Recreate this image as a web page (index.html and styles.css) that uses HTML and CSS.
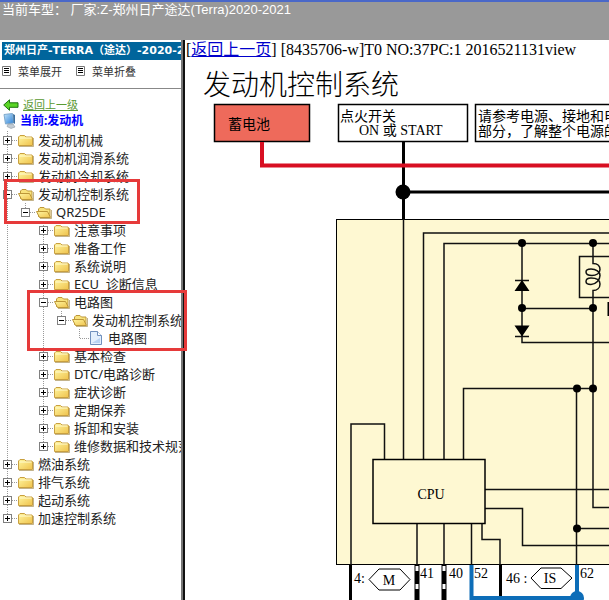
FILE: index.html
```html
<!DOCTYPE html>
<html lang="zh-CN">
<head>
    <meta charset="UTF-8">
    <meta name="viewport" content="width=device-width, initial-scale=1.0">
    <title>郑州日产途达(Terra)2020-2021</title>
    <link rel="stylesheet" href="styles.css">
</head>
<body>

    <!-- Shared icons -->
    <svg class="icon-defs" width="0" height="0" aria-hidden="true">
        <defs>
            <linearGradient id="gold" x1="0" y1="0" x2="1" y2="1">
                <stop offset="0" stop-color="#fff6a0"/>
                <stop offset="1" stop-color="#efc24c"/>
            </linearGradient>
            <linearGradient id="screen" x1="0" y1="0" x2="1" y2="1">
                <stop offset="0" stop-color="#c4e6fb"/>
                <stop offset="1" stop-color="#2b7fd6"/>
            </linearGradient>
        </defs>
        <symbol id="folder" viewBox="0 0 16 16">
            <path d="M.5 13.500V5L2 3.500h4.500l1.500 1.500h6l.5 1v7.500z" fill="url(#gold)" stroke="#c9a040"/>
            <path d="M1.500 6h12" stroke="#fffbd0"/>
            <path d="M1 14.500h14.500V6" fill="none" stroke="#9b803c" stroke-opacity=".6"/>
        </symbol>
        <symbol id="folder-open" viewBox="0 0 16 16">
            <path d="M2.500 12.500V5L4 3.500h4L9.500 5h4.500v8z" fill="#f8e27c" stroke="#bd9738"/>
            <path d="M.5 7.500h11l3 6H3.500z" fill="url(#gold)" stroke="#bd9738"/>
            <path d="M4 14.500h11.500V6" fill="none" stroke="#9b803c" stroke-opacity=".6"/>
        </symbol>
        <symbol id="page" viewBox="0 0 16 16">
            <path d="M2.500 1.500h7l4 4v9h-11z" fill="#e3effc" stroke="#7090bd"/>
            <path d="M9.500 1.500v4h4" fill="#fff" stroke="#7090bd"/>
            <path d="M4 13l8-5v5z" fill="#b9d3f3"/>
        </symbol>
        <symbol id="list" viewBox="0 0 10 10">
            <path d="M.5.5h8v9h-8z" fill="#fff" stroke="#777"/>
            <path d="M2 2.500h5M2 4.500h5M2 6.500h5" stroke="#000"/>
        </symbol>
    </svg>

    <header class="topbar">当前车型： 厂家:Z-郑州日产途达(Terra)2020-2021</header>

    <div class="frames">
        <aside class="sidebar">
            <h1 class="menu-title">郑州日产-TERRA（途达）-2020-2021</h1>
            <div class="menu-tools">
                <button type="button" id="expandAll"><svg class="list-icon"><use href="#list"/></svg>菜单展开</button>
                <button type="button" id="collapseAll"><svg class="list-icon"><use href="#list"/></svg>菜单折叠</button>
            </div>

            <div class="menu-back">
                <svg width="16" height="12" viewBox="0 0 16 12"><path d="M.7 6L6.500.8v3H15v4.500H6.500v3z" fill="#5bd526" stroke="#1d7410"/></svg>
                <a href="#">返回上一级</a>
            </div>
            <div class="menu-current">
                <svg width="13" height="16" viewBox="0 0 13 16">
                    <path d="M1 1.500L9.500.5l1 9.500-8 1z" fill="url(#screen)" stroke="#7fa9cc"/>
                    <path d="M10 1l2 1v9l-1.500-1z" fill="#3d6f9e"/>
                    <path d="M5 11h5l2 3-4 1.500-4-2z" fill="#c2cbd3" stroke="#8e9aa5" stroke-width=".6"/>
                </svg>
                <span>当前:发动机</span>
            </div>

            <ul class="tree">
                <li><div class="node"><button type="button" class="toggle" aria-label="展开"></button><svg class="icon"><use href="#folder"/></svg><span>发动机机械</span></div></li>
                <li><div class="node"><button type="button" class="toggle" aria-label="展开"></button><svg class="icon"><use href="#folder"/></svg><span>发动机润滑系统</span></div></li>
                <li><div class="node"><button type="button" class="toggle" aria-label="展开"></button><svg class="icon"><use href="#folder"/></svg><span>发动机冷却系统</span></div></li>
                <li class="open">
                    <div class="node"><button type="button" class="toggle" aria-label="折叠"></button><svg class="icon"><use href="#folder-open"/></svg><span>发动机控制系统</span></div>
                    <ul>
                        <li class="open">
                            <div class="node"><button type="button" class="toggle" aria-label="折叠"></button><svg class="icon"><use href="#folder-open"/></svg><span>QR25DE</span></div>
                            <ul>
                                <li><div class="node"><button type="button" class="toggle" aria-label="展开"></button><svg class="icon"><use href="#folder"/></svg><span>注意事项</span></div></li>
                                <li><div class="node"><button type="button" class="toggle" aria-label="展开"></button><svg class="icon"><use href="#folder"/></svg><span>准备工作</span></div></li>
                                <li><div class="node"><button type="button" class="toggle" aria-label="展开"></button><svg class="icon"><use href="#folder"/></svg><span>系统说明</span></div></li>
                                <li><div class="node"><button type="button" class="toggle" aria-label="展开"></button><svg class="icon"><use href="#folder"/></svg><span>ECU&nbsp; 诊断信息</span></div></li>
                                <li class="open">
                                    <div class="node"><button type="button" class="toggle" aria-label="折叠"></button><svg class="icon"><use href="#folder-open"/></svg><span>电路图</span></div>
                                    <ul>
                                        <li class="open">
                                            <div class="node"><button type="button" class="toggle" aria-label="折叠"></button><svg class="icon"><use href="#folder-open"/></svg><span>发动机控制系统</span></div>
                                            <ul>
                                                <li><div class="node leaf"><svg class="icon"><use href="#page"/></svg><span>电路图</span></div></li>
                                            </ul>
                                        </li>
                                    </ul>
                                </li>
                                <li><div class="node"><button type="button" class="toggle" aria-label="展开"></button><svg class="icon"><use href="#folder"/></svg><span>基本检查</span></div></li>
                                <li><div class="node"><button type="button" class="toggle" aria-label="展开"></button><svg class="icon"><use href="#folder"/></svg><span>DTC/电路诊断</span></div></li>
                                <li><div class="node"><button type="button" class="toggle" aria-label="展开"></button><svg class="icon"><use href="#folder"/></svg><span>症状诊断</span></div></li>
                                <li><div class="node"><button type="button" class="toggle" aria-label="展开"></button><svg class="icon"><use href="#folder"/></svg><span>定期保养</span></div></li>
                                <li><div class="node"><button type="button" class="toggle" aria-label="展开"></button><svg class="icon"><use href="#folder"/></svg><span>拆卸和安装</span></div></li>
                                <li><div class="node"><button type="button" class="toggle" aria-label="展开"></button><svg class="icon"><use href="#folder"/></svg><span>维修数据和技术规范</span></div></li>
                            </ul>
                        </li>
                    </ul>
                </li>
                <li><div class="node"><button type="button" class="toggle" aria-label="展开"></button><svg class="icon"><use href="#folder"/></svg><span>燃油系统</span></div></li>
                <li><div class="node"><button type="button" class="toggle" aria-label="展开"></button><svg class="icon"><use href="#folder"/></svg><span>排气系统</span></div></li>
                <li><div class="node"><button type="button" class="toggle" aria-label="展开"></button><svg class="icon"><use href="#folder"/></svg><span>起动系统</span></div></li>
                <li><div class="node"><button type="button" class="toggle" aria-label="展开"></button><svg class="icon"><use href="#folder"/></svg><span>加速控制系统</span></div></li>
            </ul>
        </aside>

        <main class="content">
            <div class="crumb">[<a href="#">返回上一页</a>] [8435706-w]T0 NO:37PC:1 2016521131view</div>

            <!-- Wiring diagram -->
            <svg class="diagram" width="600" height="560" viewBox="185 60 600 560">
                <text x="203" y="95" class="d-title">发动机控制系统</text>

                <!-- Power supply -->
                <g stroke="#000" fill="#fff" stroke-width="1.500">
                    <rect x="214.500" y="104.500" width="95" height="37" fill="#ee6a5b"/>
                    <rect x="338.500" y="104.500" width="129" height="37"/>
                    <rect x="475.500" y="104.500" width="260" height="37"/>
                </g>
                <text x="228" y="129">蓄电池</text>
                <text x="340" y="121">点火开关</text>
                <text x="359" y="135">ON 或 START</text>
                <text x="478" y="121">请参考电源、接地和电路</text>
                <text x="478" y="136">部分，了解整个电源的详</text>

                <path d="M403.500 142v77" class="cable"/>
                <path d="M403 192h400" class="cable"/>
                <path d="M262 142v23.500h540" fill="none" stroke="#d80f22" stroke-width="4"/>
                <circle cx="403" cy="192" r="7.500"/>

                <!-- ECM -->
                <rect x="336.500" y="219.500" width="460" height="345" fill="#fef8d2" stroke="#000"/>
                <g class="wire">
                    <path d="M403.500 219v241"/>
                    <path d="M423.500 460V233h380"/>
                    <path d="M444 460V243.500h360"/>
                    <path d="M463.500 460v-71.500h129.500"/>
                    <path d="M351 565V424h33.500v36"/>
                    <path d="M522 243v99.500h280"/>
                    <path d="M522 308.500h71"/>
                    <path d="M593 243v20.500c5 0 7 3 7 6c0 4-4 6-8 6c-4 0-6-1-6-3.500c0-2 2-3 5-3c5 0 9 3 9 6.500c0 4-4 9-9 9c-3 0-5-1-5-3c0-2 2-3.500 5-3.500c5 0 9 2 9 6c0 4-3 6.500-7 6.500v217h200"/>
                    <path d="M803 256.500h-223.500v41h223"/>
                    <path d="M576.500 389v176"/>
                    <path d="M485 489.500h318"/>
                    <path d="M485 508.500h37.500v37h280"/>
                    <path d="M576 528.500h230"/>
                    <path d="M417 524v41"/>
                    <path d="M444 524v41"/>
                    <path d="M471.500 524v41"/>
                    <path d="M482 524v15.500h18V565"/>
                    <path d="M515 280.500h14M515 336.500h14"/>
                </g>
                <path d="M522 280l7.500 11h-15zM522 336.500l7.500-11h-15z"/>
                <circle cx="522" cy="243" r="4"/>
                <circle cx="593" cy="243" r="4"/>
                <circle cx="522" cy="308" r="4"/>
                <circle cx="593" cy="308" r="4"/>
                <circle cx="577" cy="388.500" r="4"/>
                <circle cx="593" cy="388.500" r="4"/>
                <circle cx="577" cy="528.500" r="4"/>
                <path d="M608.500 302v14" stroke="#000" stroke-width="2"/>

                <rect x="373" y="459.500" width="112" height="64" fill="#fef8d2" stroke="#000" stroke-width="1.500"/>
                <text x="431" y="499" text-anchor="middle">CPU</text>

                <!-- Connector pins -->
                <path d="M350.500 565v60M500.500 565v32" class="cable"/>
                <path d="M417 565v60M444 565v60" stroke="#000" stroke-width="5"/>
                <path d="M417 566v60M444 566v60" stroke="#fff" stroke-width="3" stroke-dasharray="5 13"/>
                <path d="M471.500 565v33H577V565" fill="none" stroke="#0d6db8" stroke-width="4"/>
                <circle cx="577" cy="598" r="7" fill="#0d6db8"/>
                <g fill="#fff" stroke="#000">
                    <path d="M369 579.500l10-10.500h21l10 10.500-10 10.500h-21z"/>
                    <path d="M531 578l10-10h20l11 10-11 10.500h-20z"/>
                </g>
                <text x="354" y="583">4:</text>
                <text x="389" y="585" text-anchor="middle">M</text>
                <text x="420" y="578">41</text>
                <text x="449" y="578">40</text>
                <text x="474" y="578">52</text>
                <text x="506" y="583">46 :</text>
                <text x="550" y="583" text-anchor="middle">IS</text>
                <text x="580" y="578">62</text>
            </svg>
        </main>
    </div>

    <!-- Red marks over the menu -->
    <div class="mark mark-engine"></div>
    <div class="mark mark-wiring"></div>

    <script>
        // Open or close one branch of the menu
        function setOpen(item, open) {
            if (!item.querySelector("ul")) return;
            item.classList.toggle("open", open);
            item.querySelector(".icon use").setAttribute("href", open ? "#folder-open" : "#folder");
            item.querySelector(".toggle").setAttribute("aria-label", open ? "折叠" : "展开");
        }

        document.querySelectorAll(".toggle").forEach(button => {
            const item = button.closest("li");
            button.onclick = () => setOpen(item, !item.classList.contains("open"));
        });

        document.getElementById("expandAll").onclick = () =>
            document.querySelectorAll(".tree li").forEach(item => setOpen(item, true));
        document.getElementById("collapseAll").onclick = () =>
            document.querySelectorAll(".tree li").forEach(item => setOpen(item, false));
    </script>

</body>
</html>
```

FILE: styles.css
```css
body {
    margin: 0;
    height: 100vh;
    display: flex;
    flex-direction: column;
    overflow: hidden;
    position: relative;
    font-family: "Noto Sans", "Noto Sans CJK SC", sans-serif;
    color: #222;
}
.icon-defs {
    position: absolute;
}
.topbar {
    box-sizing: border-box;
    height: 40px;
    flex: none;
    padding: 0 2px;
    border-top: 2px solid #4a68c8;
    background-color: #999;
    color: white;
    font: 13px/15px "Liberation Sans", "Noto Sans CJK SC", sans-serif;
}
.frames {
    flex: 1;
    display: flex;
    min-height: 0;
}

/* Menu */
.sidebar {
    width: 181px;
    flex: none;
    overflow: hidden;
    white-space: nowrap;
    border-right: 2px solid #777;
}
.menu-title {
    margin: 2px 0 0 2px;
    padding-left: 2px;
    background-color: #00659c;
    color: white;
    font: bold 11px/18px "DejaVu Sans", "Noto Sans CJK SC", sans-serif;
    overflow: hidden;
}
.menu-tools {
    display: flex;
    gap: 14px;
    height: 28px;
    padding: 0 2px;
    border-bottom: 1px solid #888;
}
.menu-tools button {
    display: flex;
    align-items: center;
    gap: 6px;
    height: 22px;
    padding: 0;
    border: 0;
    background: none;
    color: #333;
    font: 11px/22px "Noto Sans CJK SC", sans-serif;
}
.list-icon {
    width: 10px;
    height: 10px;
}
.menu-back,
.menu-current {
    display: flex;
    align-items: center;
    gap: 4px;
    height: 16px;
    padding-left: 3px;
    font-size: 11px;
    line-height: 16px;
}
.menu-back {
    margin-top: 8px;
}
.menu-back a {
    color: #5a9a32;
}
.menu-current {
    color: #00f;
    font-size: 12px;
    font-weight: bold;
    margin-bottom: 2px;
}
.tree,
.tree ul {
    margin: 0;
    padding: 0;
    list-style: none;
}
.tree ul {
    display: none;
    padding-left: 18px;
}
.tree .open > ul {
    display: block;
}
.tree li {
    background: repeating-linear-gradient(#999 0 1px, transparent 1px 2px) 7px 0 / 1px 100% no-repeat;
}
.tree li:last-child {
    background-size: 1px 10px;
}
.node {
    display: flex;
    align-items: center;
    height: 18px;
    padding-left: 3px;
    font-size: 13px;
    line-height: 18px;
    background: repeating-linear-gradient(90deg, #999 0 1px, transparent 1px 2px) 8px 9px / 10px 1px no-repeat;
}
.toggle {
    box-sizing: border-box;
    width: 9px;
    height: 9px;
    flex: none;
    margin-right: 6px;
    padding: 0;
    border: 1px solid #808080;
    background:
        linear-gradient(#000, #000) center / 5px 1px no-repeat,
        linear-gradient(#000, #000) center / 1px 5px no-repeat,
        white;
}
.open > .node .toggle {
    background: linear-gradient(#000, #000) center / 5px 1px no-repeat, white;
}
.leaf {
    padding-left: 16px;
}
.icon {
    width: 16px;
    height: 16px;
    flex: none;
    margin-right: 4px;
}

/* Document */
.content {
    flex: 1;
    min-width: 0;
    overflow: hidden;
    border-left: 2px solid #111;
    font-family: "Liberation Serif", "Noto Sans CJK SC", serif;
}
.crumb {
    height: 20px;
    padding-left: 1px;
    font-size: 16px;
    line-height: 20px;
    color: #000;
    white-space: nowrap;
}
.crumb a {
    color: #00c;
}
.diagram {
    display: block;
    font-size: 14px;
}
.d-title {
    font-size: 28px;
    font-weight: 300;
}
.cable {
    fill: none;
    stroke: #000;
    stroke-width: 3px;
}
.wire {
    fill: none;
    stroke: #111;
    stroke-width: 1.5px;
}

/* Red marks */
.mark {
    position: absolute;
    box-sizing: border-box;
    border: 3px solid #e63a3a;
    pointer-events: none;
}
.mark-engine {
    left: 4px;
    top: 179px;
    width: 136px;
    height: 45px;
}
.mark-wiring {
    left: 27px;
    top: 290px;
    width: 160px;
    height: 61px;
}
```
